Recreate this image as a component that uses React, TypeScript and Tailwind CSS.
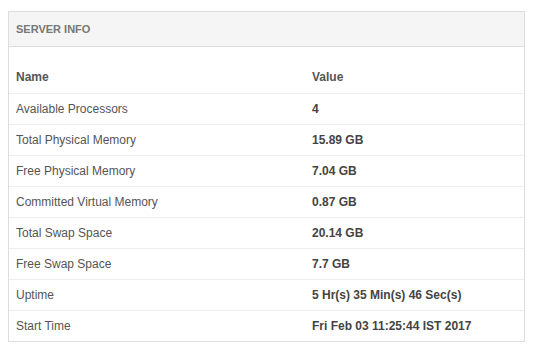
const rows: [string, string][] = [
  ['Available Processors', '4'],
  ['Total Physical Memory', '15.89 GB'],
  ['Free Physical Memory', '7.04 GB'],
  ['Committed Virtual Memory', '0.87 GB'],
  ['Total Swap Space', '20.14 GB'],
  ['Free Swap Space', '7.7 GB'],
  ['Uptime', '5 Hr(s) 35 Min(s) 46 Sec(s)'],
  ['Start Time', 'Fri Feb 03 11:25:44 IST 2017'],
];

const App = () => {
  return (
    <div className="min-h-screen bg-white pt-[11px] pl-[8px] font-['Liberation_Sans',Arial,sans-serif]">
      <div className="w-[517px] border border-[#dddddd] bg-white">
        <div className="h-[35px] bg-[#f5f5f5] border-b border-[#dddddd] px-[7px] flex items-center">
          <h3 className="text-[11px] font-bold text-[#777777] uppercase">Server Info</h3>
        </div>
        <div className="pt-[15px]">
          <table className="w-full border-collapse text-[12px] text-[#555555]">
            <thead>
              <tr className="h-[31px]">
                <th className="w-[296px] px-[7px] text-left font-bold text-[#555555] border-b border-[#eeeeee]">Name</th>
                <th className="px-[7px] text-left font-bold text-[#555555] border-b border-[#eeeeee]">Value</th>
              </tr>
            </thead>
            <tbody>
              {rows.map(([name, value], i) => (
                <tr key={name} className="h-[31px]">
                  <td className={`px-[7px] ${i < rows.length - 1 ? 'border-b border-[#eeeeee]' : ''}`}>{name}</td>
                  <td className={`px-[7px] font-bold text-[#444444] ${i < rows.length - 1 ? 'border-b border-[#eeeeee]' : ''}`}>{value}</td>
                </tr>
              ))}
            </tbody>
          </table>
        </div>
      </div>
    </div>
  );
};

export default App;
